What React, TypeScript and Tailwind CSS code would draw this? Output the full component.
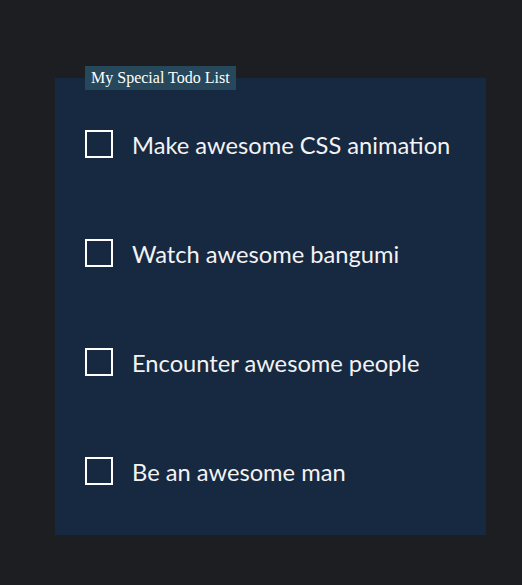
import React from "react";

const todos = [
  "Make awesome CSS animation",
  "Watch awesome bangumi",
  "Encounter awesome people",
  "Be an awesome man",
];

export default function App() {
  return (
    <div className="min-h-[585px] w-full bg-[#1c1e22] pt-[78px] pl-[55px]">
      <div className="relative w-[431px] bg-[#172841] pl-[30px] pt-[52px] pb-[50px]">
        {/* title tag sitting on the top edge */}
        <span
          className="absolute left-[30px] top-[-12px] h-[24px] bg-[#27475a] px-[6px] text-[16px] leading-[24px] text-white"
          style={{ fontFamily: '"Liberation Serif", serif' }}
        >
          My Special Todo List
        </span>

        <ul className="flex flex-col gap-[81px]">
          {todos.map((t) => (
            <li key={t} className="flex h-[28px] items-center">
              <div className="h-[28px] w-[28px] shrink-0 border-2 border-white" />
              <span
                className="ml-[19px] translate-y-[1px] text-[23.7px] leading-[28px] text-[#f3f3f3]"
                style={{ fontFamily: "Lato, sans-serif" }}
              >
                {t}
              </span>
            </li>
          ))}
        </ul>
      </div>
    </div>
  );
}
